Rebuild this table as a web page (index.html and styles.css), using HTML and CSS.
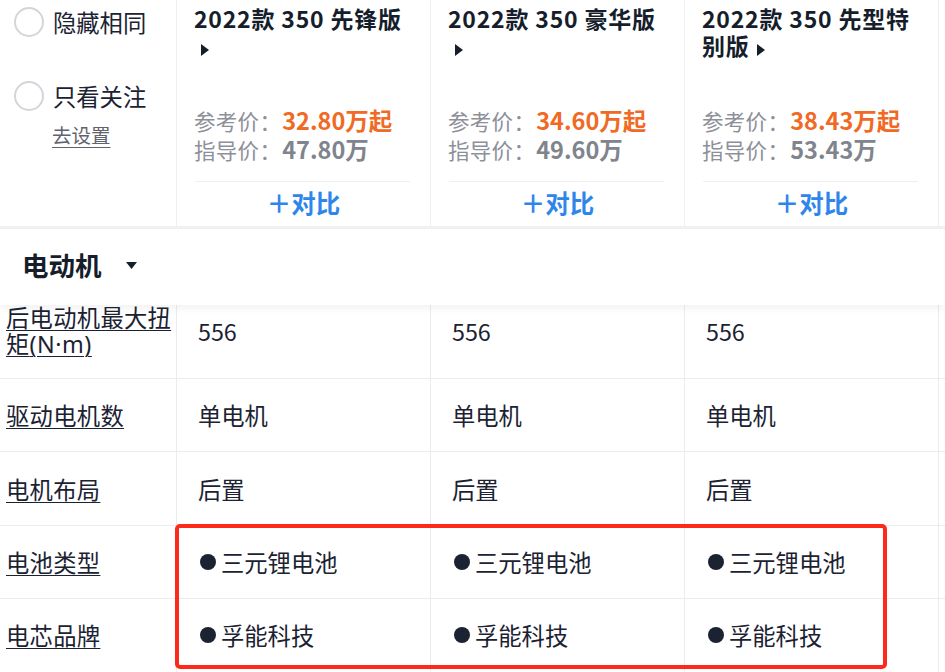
FILE: index.html
```html
<!DOCTYPE html>
<html lang="zh-CN">
<head>
<meta charset="utf-8">
<title>参数配置</title>
<link rel="stylesheet" href="styles.css">
</head>
<body>
<div class="page">
  <div class="head">
    <div class="opts">
      <div class="opt"><span class="radio"></span><span>隐藏相同</span></div>
      <div class="opt opt2"><span class="radio"></span><span>只看关注</span></div>
      <a class="setlink">去设置</a>
    </div>
    <div class="car">
      <div class="title">2022款 350 先锋版<svg class="tri" viewBox="0 0 8 12" width="8" height="12"><path d="M0 0 L8 6 L0 12 Z"/></svg></div>
      <div class="price"><span class="lbl">参考价：</span><b class="ref">32.80万起</b></div>
      <div class="price"><span class="lbl">指导价：</span><b class="msrp">47.80万</b></div>
      <div class="cmp">＋对比</div>
    </div>
    <div class="car">
      <div class="title">2022款 350 豪华版<svg class="tri" viewBox="0 0 8 12" width="8" height="12"><path d="M0 0 L8 6 L0 12 Z"/></svg></div>
      <div class="price"><span class="lbl">参考价：</span><b class="ref">34.60万起</b></div>
      <div class="price"><span class="lbl">指导价：</span><b class="msrp">49.60万</b></div>
      <div class="cmp">＋对比</div>
    </div>
    <div class="car">
      <div class="title">2022款 350 先型特别版<svg class="tri" viewBox="0 0 8 12" width="8" height="12"><path d="M0 0 L8 6 L0 12 Z"/></svg></div>
      <div class="price"><span class="lbl">参考价：</span><b class="ref">38.43万起</b></div>
      <div class="price"><span class="lbl">指导价：</span><b class="msrp">53.43万</b></div>
      <div class="cmp">＋对比</div>
    </div>
    <div class="fill"></div>
  </div>

  <div class="sec">
    <span class="sec-name">电动机</span>
    <svg class="sec-caret" viewBox="0 0 11 7" width="11" height="7"><path d="M0 0 H11 L5.5 7 Z"/></svg>
  </div>

  <div class="tbl-wrap">
    <div class="tbl">
      <div class="row tall">
        <div class="cell label"><span class="u">后电动机最大扭<br>矩<span class="lat">(N·m)</span></span></div>
        <div class="cell">556</div><div class="cell">556</div><div class="cell">556</div><div class="cell edge"></div>
      </div>
      <div class="row">
        <div class="cell label"><span class="u">驱动电机数</span></div>
        <div class="cell">单电机</div><div class="cell">单电机</div><div class="cell">单电机</div><div class="cell edge"></div>
      </div>
      <div class="row">
        <div class="cell label"><span class="u">电机布局</span></div>
        <div class="cell">后置</div><div class="cell">后置</div><div class="cell">后置</div><div class="cell edge"></div>
      </div>
      <div class="row">
        <div class="cell label"><span class="u">电池类型</span></div>
        <div class="cell"><i class="dot"></i>三元锂电池</div><div class="cell"><i class="dot"></i>三元锂电池</div><div class="cell"><i class="dot"></i>三元锂电池</div><div class="cell edge"></div>
      </div>
      <div class="row">
        <div class="cell label"><span class="u">电芯品牌</span></div>
        <div class="cell"><i class="dot"></i>孚能科技</div><div class="cell"><i class="dot"></i>孚能科技</div><div class="cell"><i class="dot"></i>孚能科技</div><div class="cell edge"></div>
      </div>
    </div>
  </div>

  <div class="mark"></div>
</div>
</body>
</html>
```

FILE: styles.css
```css
* { box-sizing: border-box; }
html, body { margin: 0; padding: 0; background: #fff; }
body {
  font-family: "Noto Sans CJK SC", "Noto Sans", sans-serif;
  color: #1b2232;
  width: 945px;
  height: 672px;
  overflow: hidden;
}
.page { position: relative; width: 945px; height: 672px; overflow: hidden; }

/* header */
.head {
  display: grid;
  grid-template-columns: 177px 254px 254px 254px 1fr;
  height: 229px;
  border-bottom: 3px solid #f0f1f3;
}
.opts { position: relative; border-right: 1px solid #eeeff1; }
.opt {
  display: flex;
  align-items: center;
  gap: 9px;
  padding-left: 14px;
  height: 44px;
  font-size: 23.3px;
  color: #1b2232;
}
.opt2 { margin-top: 30px; }
.radio {
  width: 30px; height: 30px;
  border: 2px solid #d3d5da;
  border-radius: 50%;
  flex: none;
}
.setlink {
  display: block;
  margin: 3px 0 0 52px;
  font-size: 19.5px;
  line-height: 28px;
  color: #5f636b;
  text-decoration: underline;
  text-underline-offset: 4px;
}
.car {
  display: flex;
  flex-direction: column;
  padding: 5px 20px 0 17px;
  border-right: 1px solid #eeeff1;
}
.title {
  height: 101px;
  font-size: 23px;
  font-weight: 700;
  line-height: 27px;
  letter-spacing: 0.8px;
  color: #161d2b;
}
.tri { margin-left: 7px; fill: #161d2b; vertical-align: -1px; }
.price {
  font-size: 21.5px;
  line-height: 29px;
  color: #8d9099;
  white-space: nowrap;
}
.lbl { letter-spacing: 0.3px; }
.ref { color: #f06a24; font-size: 23.5px; margin-left: 1px; }
.msrp { color: #80848d; font-size: 23.5px; margin-left: 1px; }
.cmp {
  margin-top: 17px;
  border-top: 1px solid #eeeff1;
  flex: 1;
  display: flex;
  align-items: center;
  justify-content: center;
  font-size: 24.5px;
  font-weight: 700;
  color: #2f86ea;
  padding: 0 0 3px 2px;
  margin-left: 1px;
}
.fill { }

/* section header */
.sec {
  position: relative;
  z-index: 2;
  height: 76px;
  display: flex;
  align-items: center;
  padding: 0 0 5px 22px;
  background: #fff;
  box-shadow: 0 4px 8px rgba(0, 0, 0, 0.05);
}
.sec-name { font-size: 26.5px; font-weight: 700; color: #161d2b; }
.sec-caret { margin-left: 24px; fill: #161d2b; margin-top: 2px; }

/* table */
.tbl-wrap { height: 367px; overflow: hidden; }
.tbl { margin-top: -22px; }
.row {
  display: grid;
  grid-template-columns: 177px 254px 254px 254px 1fr;
  height: 73.4px;
  border-bottom: 1px solid #ececee;
}
.row.tall { height: 96px; }
.cell {
  display: flex;
  align-items: center;
  padding-left: 21px;
  border-right: 1px solid #ececee;
  font-size: 23.3px;
  color: #1b2232;
}
.cell.label { padding-left: 6px; line-height: 26px; }
.cell.edge { border-right: none; }
.u { text-decoration: underline; text-underline-offset: 3px; text-decoration-thickness: 1px; letter-spacing: 0.3px; }
.lat { font-family: "Noto Sans", sans-serif; letter-spacing: 0.5px; }
.dot {
  display: inline-block;
  width: 16px; height: 16px;
  border-radius: 50%;
  background: #1b2232;
  margin: 0 5px 0 2px;
  flex: none;
}

/* annotation */
.mark {
  position: absolute;
  left: 175px;
  top: 524px;
  width: 712px;
  height: 145px;
  border: 4px solid #fd2a1b;
  border-radius: 5px;
  z-index: 3;
}
```
